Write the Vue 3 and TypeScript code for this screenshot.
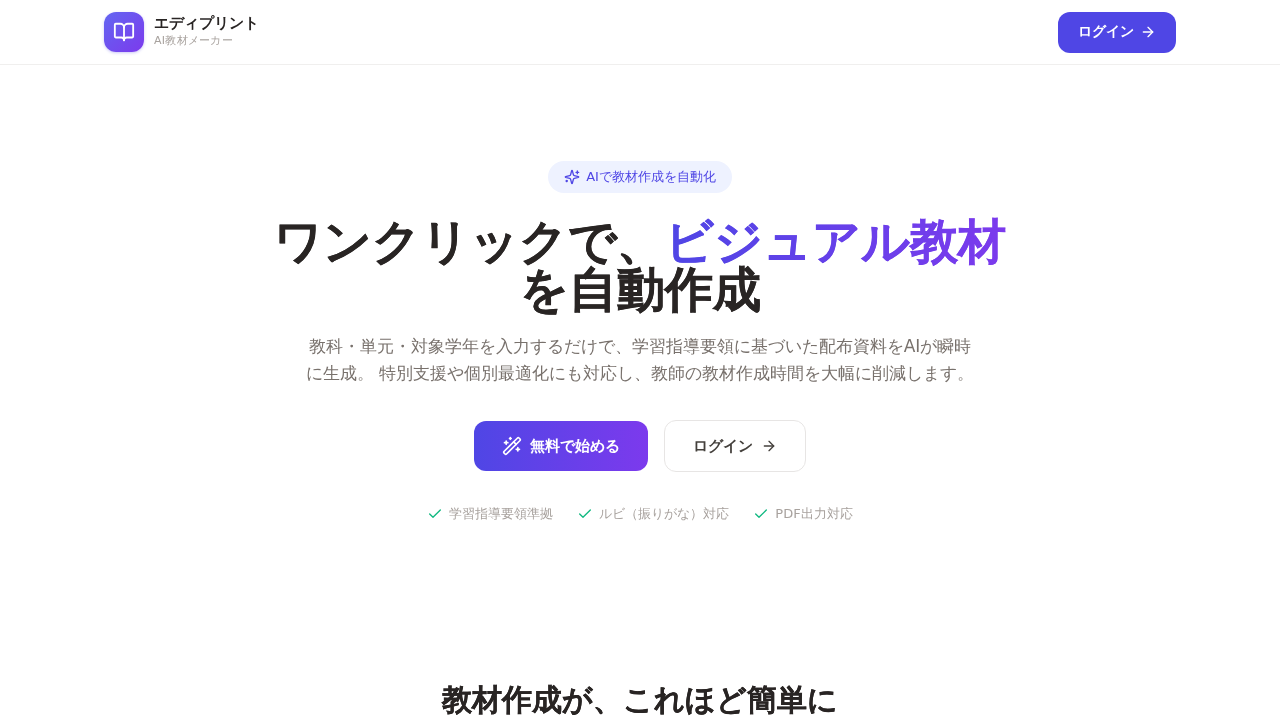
<script setup lang="ts">
const checks = ['学習指導要領準拠', 'ルビ（振りがな）対応', 'PDF出力対応']
</script>

<template>
  <div class="page">
    <header class="nav">
      <div class="nav-inner">
        <div class="brand">
          <div class="logo">
            <svg width="22" height="22" viewBox="0 0 24 24" fill="none" stroke="#fff" stroke-width="2" stroke-linecap="round" stroke-linejoin="round">
              <path d="M12 7v14" />
              <path d="M3 18a1 1 0 0 1-1-1V4a1 1 0 0 1 1-1h5a4 4 0 0 1 4 4 4 4 0 0 1 4-4h5a1 1 0 0 1 1 1v13a1 1 0 0 1-1 1h-6a3 3 0 0 0-3 3 3 3 0 0 0-3-3z" />
            </svg>
          </div>
          <div class="brand-text">
            <div class="brand-name">エディプリント</div>
            <div class="brand-sub">AI教材メーカー</div>
          </div>
        </div>
        <button class="nav-btn">
          ログイン
          <svg width="16" height="16" viewBox="0 0 24 24" fill="none" stroke="currentColor" stroke-width="2" stroke-linecap="round" stroke-linejoin="round">
            <path d="M5 12h14" />
            <path d="m12 5 7 7-7 7" />
          </svg>
        </button>
      </div>
    </header>

    <main>
      <section class="hero">
        <div class="pill">
          <svg width="16" height="16" viewBox="0 0 24 24" fill="none" stroke="currentColor" stroke-width="2" stroke-linecap="round" stroke-linejoin="round">
            <path d="M9.937 15.5A2 2 0 0 0 8.5 14.063l-6.135-1.582a.5.5 0 0 1 0-.962L8.5 9.936A2 2 0 0 0 9.937 8.5l1.582-6.135a.5.5 0 0 1 .963 0L14.063 8.5A2 2 0 0 0 15.5 9.937l6.135 1.581a.5.5 0 0 1 0 .964L15.5 14.063a2 2 0 0 0-1.437 1.437l-1.582 6.135a.5.5 0 0 1-.963 0z" />
            <path d="M20 3v4" />
            <path d="M22 5h-4" />
            <path d="M4 17v2" />
            <path d="M5 18H3" />
          </svg>
          AIで教材作成を自動化
        </div>
        <h1 class="title">ワンクリックで、<span class="grad">ビジュアル教材</span>を自動作成</h1>
        <p class="lead">教科・単元・対象学年を入力するだけで、学習指導要領に基づいた配布資料をAIが瞬時に生成。 特別支援や個別最適化にも対応し、教師の教材作成時間を大幅に削減します。</p>
        <div class="actions">
          <button class="btn-primary">
            <svg width="20" height="20" viewBox="0 0 24 24" fill="none" stroke="currentColor" stroke-width="2" stroke-linecap="round" stroke-linejoin="round">
              <path d="m21.64 3.64-1.28-1.28a1.21 1.21 0 0 0-1.72 0L2.36 18.64a1.21 1.21 0 0 0 0 1.72l1.28 1.28a1.2 1.2 0 0 0 1.72 0L21.64 5.36a1.2 1.2 0 0 0 0-1.72" />
              <path d="m14 7 3 3" />
              <path d="M5 6v4" />
              <path d="M19 14v4" />
              <path d="M10 2v2" />
              <path d="M7 8H3" />
              <path d="M21 16h-4" />
              <path d="M11 3H9" />
            </svg>
            無料で始める
          </button>
          <button class="btn-outline">
            ログイン
            <svg width="16" height="16" viewBox="0 0 24 24" fill="none" stroke="currentColor" stroke-width="2" stroke-linecap="round" stroke-linejoin="round">
              <path d="M5 12h14" />
              <path d="m12 5 7 7-7 7" />
            </svg>
          </button>
        </div>
        <ul class="checks">
          <li v-for="c in checks" :key="c">
            <svg width="16" height="16" viewBox="0 0 24 24" fill="none" stroke="#10b981" stroke-width="2" stroke-linecap="round" stroke-linejoin="round">
              <path d="M20 6 9 17l-5-5" />
            </svg>
            {{ c }}
          </li>
        </ul>
      </section>
      <section class="next">
        <h2>教材作成が、これほど簡単に</h2>
      </section>
    </main>
  </div>
</template>

<style>
html, body {
  margin: 0;
  height: 720px;
  overflow: hidden;
  background: #fff;
}
</style>

<style scoped>
.page {
  font-family: "DejaVu Sans", sans-serif;
  color: #292524;
  will-change: transform;
}

.nav {
  border-bottom: 1px solid #f0efee;
}

.nav-inner {
  height: 64px;
  padding: 0 104px;
  display: flex;
  align-items: center;
  justify-content: space-between;
}

.brand {
  display: flex;
  align-items: center;
  gap: 10px;
}

.logo {
  width: 40px;
  height: 40px;
  border-radius: 12px;
  background: linear-gradient(135deg, #6366f1, #7c3aed);
  box-shadow: 0 1px 3px rgba(79, 70, 229, 0.3);
  display: flex;
  align-items: center;
  justify-content: center;
}

.brand-text {
  padding-bottom: 2px;
}

.brand-name {
  font-size: 15px;
  font-weight: 700;
  line-height: 19px;
}

.brand-sub {
  font-size: 11px;
  line-height: 16px;
  letter-spacing: 0.025em;
  color: #a8a29e;
}

button {
  font-family: inherit;
  cursor: pointer;
}

.nav-btn {
  height: 41px;
  padding: 0 20px;
  border: none;
  border-radius: 12px;
  background: #4f46e5;
  color: #fff;
  font-size: 14px;
  font-weight: 700;
  display: flex;
  align-items: center;
  gap: 6px;
}

.hero {
  padding-top: 96px;
  display: flex;
  flex-direction: column;
  align-items: center;
  text-align: center;
}

.pill {
  height: 32px;
  padding: 0 16px;
  box-sizing: border-box;
  border-radius: 16px;
  background: #eef2ff;
  color: #4f46e5;
  font-size: 13px;
  display: flex;
  align-items: center;
  gap: 6px;
}

.title {
  width: 768px;
  margin: 24px 0 20px;
  font-size: 48px;
  line-height: 48px;
  font-weight: 800;
  color: #292524;
  -webkit-text-stroke: 0.4px #292524;
}

.grad {
  background: linear-gradient(90deg, #4f46e5, #7c3aed);
  -webkit-background-clip: text;
  background-clip: text;
  color: transparent;
  -webkit-text-stroke: 0.4px transparent;
}

.lead {
  width: 672px;
  margin: 0 0 33px;
  font-size: 17px;
  line-height: 27px;
  color: #78716c;
}

.actions {
  display: flex;
  align-items: center;
  gap: 16px;
}

.btn-primary {
  height: 50px;
  padding: 0 28px;
  border: none;
  border-radius: 12px;
  background: linear-gradient(90deg, #4f46e5, #7c3aed);
  color: #fff;
  font-size: 15px;
  font-weight: 700;
  display: flex;
  align-items: center;
  gap: 8px;
}

.btn-outline {
  height: 52px;
  padding: 0 28px;
  border: 1px solid #e7e5e4;
  border-radius: 12px;
  background: #fff;
  color: #44403c;
  font-size: 15px;
  font-weight: 700;
  display: flex;
  align-items: center;
  gap: 8px;
}

.checks {
  list-style: none;
  margin: 32px 0 0;
  padding: 0;
  display: flex;
  gap: 24px;
  font-size: 13px;
  line-height: 20px;
  color: #a8a29e;
}

.checks li {
  display: flex;
  align-items: center;
  gap: 6px;
}

.next {
  margin-top: 158px;
  text-align: center;
}

.next h2 {
  margin: 0;
  font-size: 30px;
  line-height: 36px;
  font-weight: 800;
  color: #292524;
  -webkit-text-stroke: 0.2px #292524;
}
</style>
